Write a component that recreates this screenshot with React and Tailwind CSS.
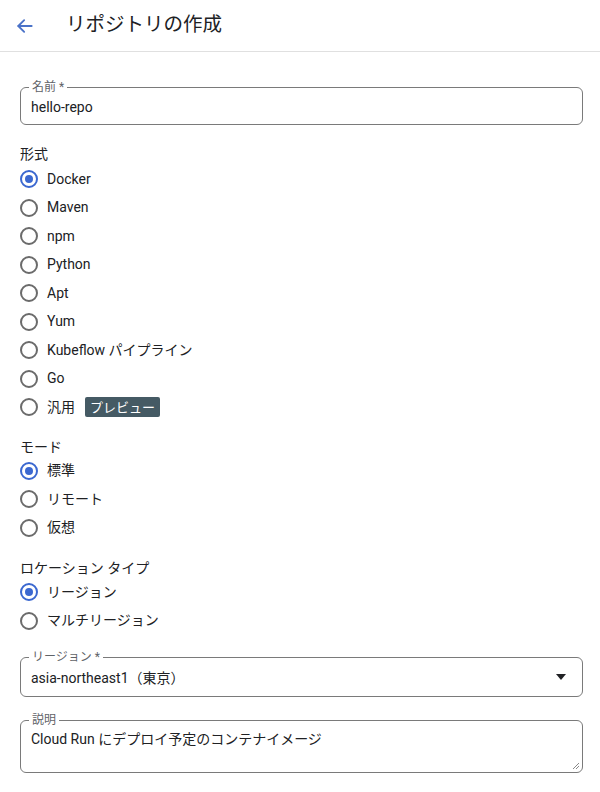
import React from 'react';

const font = { fontFamily: 'Roboto, "Noto Sans CJK JP", sans-serif' };

function Radio({ label, checked, children }) {
  return (
    <label className="flex items-center h-[28.5px] gap-[9px] text-[14px] text-[#202124]">
      <span
        className={
          'flex items-center justify-center w-[18px] h-[18px] ml-[20px] rounded-full border-2 ' +
          (checked ? 'border-[#3b68d0]' : 'border-[#6b6b6b]')
        }
      >
        {checked && <span className="w-[8px] h-[8px] rounded-full bg-[#3b68d0]" />}
      </span>
      <span>{label}</span>
      {children}
    </label>
  );
}

function Outlined({ label, children, className = '' }) {
  return (
    <div className={'relative ml-[20px] mr-[17px] border border-[#7a7a7a] rounded-[6px] px-[10px] ' + className}>
      <span className="absolute -top-[7px] left-[8px] bg-white px-[3px] text-[12px] leading-[12px] text-[#5f6368]">
        {label}
      </span>
      {children}
    </div>
  );
}

export default function App() {
  const formats = ['Docker', 'Maven', 'npm', 'Python', 'Apt', 'Yum', 'Kubeflow パイプライン', 'Go'];
  return (
    <div className="w-[600px] h-[792px] bg-white overflow-hidden" style={font}>
      {/* ヘッダー */}
      <div className="flex items-center h-[52px] border-b border-[#e0e0e0]">
        <svg className="ml-[15px]" width="20" height="20" viewBox="0 0 24 24" fill="none" stroke="#4a72c8" strokeWidth="2.2" strokeLinecap="round" strokeLinejoin="round">
          <path d="M20 12H4" />
          <path d="M11 5l-7 7 7 7" />
        </svg>
        <h1 className="ml-[31px] -mt-[2px] text-[19.5px] leading-[24px] text-[#202124]">リポジトリの作成</h1>
      </div>

      {/* 名前 */}
      <Outlined label="名前 *" className="mt-[35px] h-[38px] flex items-center">
        <div className="text-[14px] leading-[16px] text-[#202124] mt-[1px]">hello-repo</div>
      </Outlined>

      {/* 形式 */}
      <div className="mt-[21px] ml-[20px] text-[14px] text-[#202124] leading-[16px]">形式</div>
      <div className="mt-[3px]">
        {formats.map((f, i) => (
          <Radio key={f} label={f} checked={i === 0} />
        ))}
        <Radio label="汎用">
          <span className="ml-[1px] px-[5px] h-[20px] flex items-center rounded-[2px] bg-[#455a64] text-white text-[13px]">
            プレビュー
          </span>
        </Radio>
      </div>

      {/* モード */}
      <div className="mt-[17px] ml-[20px] text-[14px] text-[#202124] leading-[16px]">モード</div>
      <div className="mt-[2px]">
        <Radio label="標準" checked />
        <Radio label="リモート" />
        <Radio label="仮想" />
      </div>

      {/* ロケーション タイプ */}
      <div className="mt-[18px] ml-[20px] text-[14px] text-[#202124] leading-[16px]">ロケーション タイプ</div>
      <div className="mt-[2px]">
        <Radio label="リージョン" checked />
        <Radio label="マルチリージョン" />
      </div>

      {/* リージョン */}
      <Outlined label="リージョン *" className="mt-[22px] h-[40px] flex items-center justify-between">
        <span className="text-[14px] leading-[16px] text-[#202124] mt-[1px]">asia-northeast1（東京）</span>
        <svg width="12" height="8" viewBox="0 0 12 8" className="mr-[5px]">
          <path d="M1 1h10L6 7z" fill="#202124" />
        </svg>
      </Outlined>

      {/* 説明 */}
      <Outlined label="説明" className="mt-[23px] h-[53px]">
        <div className="pt-[10px] text-[14px] leading-[16px] text-[#202124]">Cloud Run にデプロイ予定のコンテナイメージ</div>
        <svg className="absolute right-[2px] bottom-[2px]" width="8" height="8" viewBox="0 0 8 8">
          <path d="M7 1L1 7M7 4L4 7" stroke="#8a8a8a" strokeWidth="1" />
        </svg>
      </Outlined>
    </div>
  );
}
